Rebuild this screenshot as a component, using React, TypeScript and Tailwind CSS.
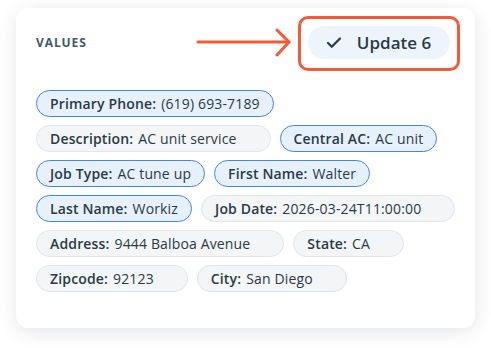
import { Check } from "lucide-react";

type Chip = { label: string; value: string; active?: boolean };

const ROWS: Chip[][] = [
  [{ label: "Primary Phone", value: "(619) 693-7189", active: true }],
  [
    { label: "Description", value: "AC unit service" },
    { label: "Central AC", value: "AC unit", active: true },
  ],
  [
    { label: "Job Type", value: "AC tune up", active: true },
    { label: "First Name", value: "Walter", active: true },
  ],
  [
    { label: "Last Name", value: "Workiz", active: true },
    { label: "Job Date", value: "2026-03-24T11:00:00" },
  ],
  [
    { label: "Address", value: "9444 Balboa Avenue" },
    { label: "State", value: "CA" },
  ],
  [
    { label: "Zipcode", value: "92123" },
    { label: "City", value: "San Diego" },
  ],
];

function ValueChip({ chip }: { chip: Chip }) {
  return (
    <span
      className={
        chip.active
          ? "flex h-[27px] items-center whitespace-nowrap rounded-full border-[1.5px] border-[#3f86e6] bg-[#e7f1fd] pl-[13px] pr-[13px] text-[14px] tracking-[0.15px] text-[#2b3a45]"
          : "flex h-[27px] items-center whitespace-nowrap rounded-full border-[1.5px] border-[#e1e5e8] bg-[#f3f5f7] pl-[13px] pr-[33px] text-[14px] tracking-[0.15px] text-[#2b3a45]"
      }
    >
      <span className="font-semibold">{chip.label}:</span>
      <span className="ml-[5px]">{chip.value}</span>
    </span>
  );
}

export default function App() {
  return (
    <div
      className="h-[353px] w-[491px] bg-white pl-4 pt-2"
      style={{ fontFamily: '"Open Sans", "Noto Sans", sans-serif' }}
    >
      <div className="relative h-[320px] w-[459px] rounded-[12px] bg-white pl-5 pr-[25px] pt-[18px] shadow-[0_4px_18px_rgba(30,40,60,0.12)]">
        <div className="flex items-center justify-between">
          <span className="pt-[1px] text-[12px] font-bold tracking-[0.9px] text-[#43596a]">
            VALUES
          </span>
          <div className="relative">
            <button className="flex h-[33px] w-[142px] items-center justify-center gap-[14px] rounded-full bg-[#edf4fc] pr-[2px] text-[17px] font-semibold text-[#2b3a45]">
              <Check size={18} strokeWidth={3} className="text-[#2b3a45]" />
              Update 6
            </button>
            <div className="pointer-events-none absolute -bottom-[12px] -left-[10px] -right-[10px] -top-[10px] rounded-[10px] border-[3px] border-[#f45a36]" />
            <svg
              className="absolute -left-[112px] top-[2px]"
              width="100"
              height="30"
              viewBox="0 0 100 30"
              fill="none"
            >
              <path d="M2 14 H93" stroke="#f45a36" strokeWidth="3" strokeLinecap="round" />
              <path
                d="M81 2 L93 14 L81 27"
                stroke="#f45a36"
                strokeWidth="3"
                strokeLinecap="round"
                strokeLinejoin="round"
              />
            </svg>
          </div>
        </div>
        <div className="mt-[31px] flex flex-col gap-[8px]">
          {ROWS.map((row, i) => (
            <div key={i} className="flex gap-[9px]">
              {row.map((chip) => (
                <ValueChip key={chip.label} chip={chip} />
              ))}
            </div>
          ))}
        </div>
      </div>
    </div>
  );
}
